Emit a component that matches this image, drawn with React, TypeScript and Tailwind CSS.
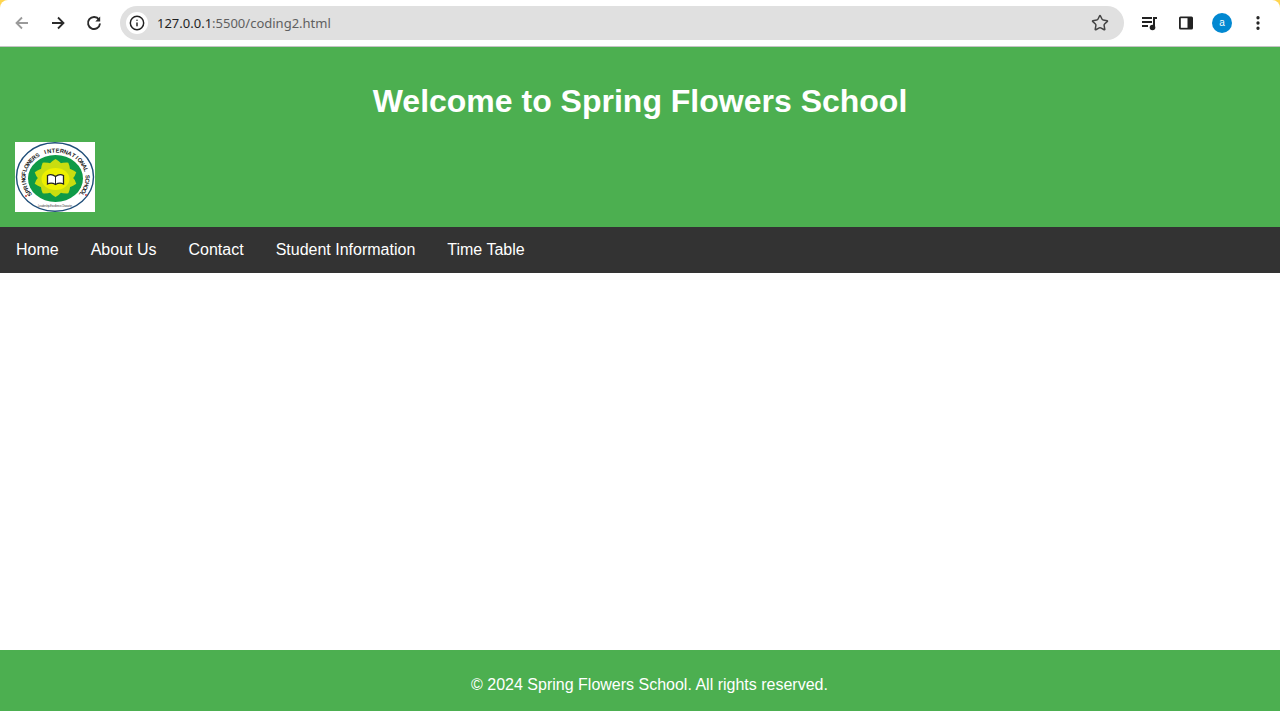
import { Info, MoreVertical, Star } from "lucide-react";

const navLinks = ["Home", "About Us", "Contact", "Student Information", "Time Table"];
const petals = [0, 36, 72, 108, 144, 180, 216, 252, 288, 324];
const ringText = "SPRINGFLOWERS INTERNATIONAL SCHOOL".split("");

function Logo() {
    return (
        <svg viewBox="0 0 80 70" className="block h-[70px] w-20 bg-white">
            <ellipse cx="40" cy="35" rx="38.5" ry="34.2" fill="none" stroke="#1f4e79" strokeWidth="1.4" />
            <ellipse cx="40.5" cy="36.5" rx="27.5" ry="23.5" fill="#0e9a47" />
            {ringText.map((ch, i) => {
                const deg = -126 + (i * 252) / (ringText.length - 1);
                const rad = (deg * Math.PI) / 180;
                const x = 40.5 + 30 * Math.sin(rad);
                const y = 36 - 25.5 * Math.cos(rad);
                return (
                    <text
                        key={i}
                        x={x}
                        y={y}
                        fontSize="5.8"
                        fontWeight="700"
                        fill="#222"
                        textAnchor="middle"
                        fontFamily="Liberation Sans, sans-serif"
                        transform={`rotate(${deg} ${x} ${y})`}
                    >
                        {ch}
                    </text>
                );
            })}
            <text x="40" y="65" fontSize="3" fill="#555" textAnchor="middle" textLength="34" fontFamily="Liberation Sans, sans-serif">
                Leadership-Excellence-Character
            </text>
            <circle cx="11" cy="54" r="0.9" fill="#d0342c" />
            <circle cx="71" cy="53" r="0.9" fill="#d0342c" />
            <g transform="translate(40.5 36) scale(1.15 1) translate(-40.5 -36)" fill="#c9dd10">
                {petals.map((a) => (
                    <path key={a} d="M40.5 36 Q27 26 40.5 17 Q54 26 40.5 36" transform={`rotate(${a} 40.5 36)`} />
                ))}
            </g>
            <ellipse cx="40.5" cy="37" rx="14" ry="11" fill="#eef000" />
            <path d="M32.5 33.5 Q36.5 31.5 40.5 34.5 Q44.5 31.5 48.5 33.5 V42 Q44.5 40 40.5 42.5 Q36.5 40 32.5 42 Z" fill="#fff" stroke="#222" strokeWidth="1.3" />
            <path d="M40.5 34.5 V42.5" stroke="#222" strokeWidth="1" />
        </svg>
    );
}

function BrowserBar() {
    return (
        <div className="shrink-0 bg-[#ffd54f]">
            <div className="flex h-[47px] items-center rounded-t-lg border-b border-[#c4c4c4] bg-white pb-px">
                <div className="flex w-[120px] items-center gap-[18px] pl-[13px]">
                    <svg viewBox="0 0 18 18" className="h-[18px] w-[18px]">
                        <path d="M15 9H3.5M9 3.5 3.5 9 9 14.5" fill="none" stroke="#9a9a9a" strokeWidth="1.8" />
                    </svg>
                    <svg viewBox="0 0 18 18" className="h-[18px] w-[18px]">
                        <path d="M3 9h11.5M9 3.5 14.5 9 9 14.5" fill="none" stroke="#2b2b2b" strokeWidth="1.8" />
                    </svg>
                    <svg viewBox="0 0 18 18" className="h-[18px] w-[18px]">
                        <path d="M14 5.6A6 6 0 1 0 15 9.5" fill="none" stroke="#2b2b2b" strokeWidth="1.9" />
                        <path d="M15.2 2.5V7.4H10.3Z" fill="#2b2b2b" />
                    </svg>
                </div>
                <div className="flex h-[34px] w-[1004px] items-center rounded-full bg-[#e0e0e0] pl-[6px] pr-[15px]">
                    <span className="flex h-[22px] w-[22px] items-center justify-center rounded-full bg-white">
                        <Info className="h-4 w-4 text-[#222]" strokeWidth={2.2} />
                    </span>
                    <span className="ml-[9px] flex-1 font-['Noto_Sans',sans-serif] text-[13px] leading-[18px] text-[#5f5f5f]">
                        <span className="text-[#1f1f1f]">127.0.0.1</span>:5500/coding2.html
                    </span>
                    <Star className="h-[18px] w-[18px] text-[#444]" strokeWidth={2} />
                </div>
                <div className="flex flex-1 items-center pl-[17px]">
                    <svg viewBox="0 0 18 18" className="h-[18px] w-[18px]">
                        <path d="M1 4h10M1 8h10M1 12h6" stroke="#222" strokeWidth="2" />
                        <path d="M12 13V3h4v2h-2v8" fill="#222" />
                        <circle cx="11.5" cy="13.5" r="2.8" fill="#222" />
                    </svg>
                    <svg viewBox="0 0 16 16" className="ml-[19px] h-4 w-4">
                        <rect x="1" y="1.5" width="14" height="13" rx="1.5" fill="#222" />
                        <rect x="2.8" y="3.2" width="6.7" height="9.6" fill="#fff" />
                    </svg>
                    <span className="ml-[18px] flex h-5 w-5 items-center justify-center rounded-full bg-[#0288d1] text-[10px] text-white">
                        a
                    </span>
                    <MoreVertical className="ml-[17px] h-[18px] w-[18px] text-[#222]" strokeWidth={2.4} />
                </div>
            </div>
        </div>
    );
}

export default function App() {
    return (
        <div className="flex h-[711px] flex-col overflow-hidden bg-white font-['Liberation_Sans',Arial,sans-serif]">
            <BrowserBar />
            <header className="h-[180px] shrink-0 bg-[#4caf50] px-[15px] pt-9 text-white">
                <h1 className="text-center text-[32px] font-bold leading-[37px]">Welcome to Spring Flowers School</h1>
                <div className="mt-[22px] w-20">
                    <Logo />
                </div>
            </header>
            <nav className="flex h-[46px] shrink-0 items-center gap-8 bg-[#333333] px-4 text-base text-white">
                {navLinks.map((link) => (
                    <a key={link} href="#">
                        {link}
                    </a>
                ))}
            </nav>
            <main className="flex-1" />
            <footer className="flex h-[61px] shrink-0 justify-center bg-[#4caf50] pl-[19px] pt-[26px] text-base leading-[18px] text-white">
                © 2024 Spring Flowers School. All rights reserved.
            </footer>
        </div>
    );
}
